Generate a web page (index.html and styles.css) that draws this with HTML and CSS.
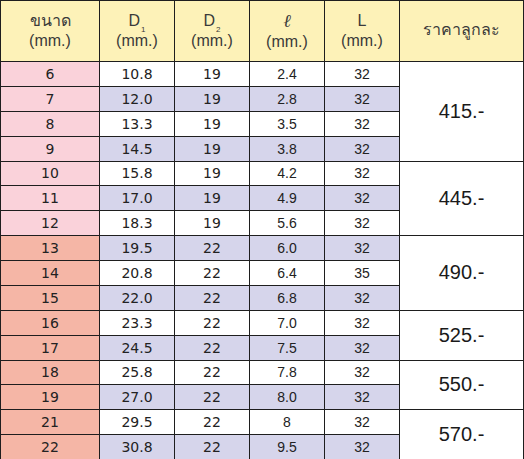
FILE: index.html
```html
<!doctype html>
<html lang="th">

<head>
  <meta charset="UTF-8" />
  <meta name="viewport" content="width=device-width, initial-scale=1.0" />
  <title>ตารางราคา</title>
  <link rel="stylesheet" href="styles.css">
</head>

<body>
  <table class="price-table">
    <colgroup>
      <col class="col-size">
      <col class="col-num">
      <col class="col-num">
      <col class="col-num">
      <col class="col-num">
      <col class="col-price">
    </colgroup>
    <thead>
      <tr class="head-row">
        <th>ขนาด<br>(mm.)</th>
        <th>D<span class="sub">1</span><br>(mm.)</th>
        <th>D<span class="sub">2</span><br>(mm.)</th>
        <th><span class="ell">ℓ</span><br>(mm.)</th>
        <th>L<br>(mm.)</th>
        <th class="price-head">ราคาลูกละ</th>
      </tr>
    </thead>
    <tbody>
      <tr>
        <td class="size pink">6</td><td class="v">10.8</td><td class="v">19</td><td class="a">2.4</td><td class="a">32</td>
        <td class="price" rowspan="4">415.-</td>
      </tr>
      <tr class="alt">
        <td class="size pink">7</td><td class="v">12.0</td><td class="v">19</td><td class="a">2.8</td><td class="a">32</td>
      </tr>
      <tr>
        <td class="size pink">8</td><td class="v">13.3</td><td class="v">19</td><td class="a">3.5</td><td class="a">32</td>
      </tr>
      <tr class="alt">
        <td class="size pink">9</td><td class="v">14.5</td><td class="v">19</td><td class="a">3.8</td><td class="a">32</td>
      </tr>
      <tr>
        <td class="size pink">10</td><td class="v">15.8</td><td class="v">19</td><td class="a">4.2</td><td class="a">32</td>
        <td class="price" rowspan="3">445.-</td>
      </tr>
      <tr class="alt">
        <td class="size pink">11</td><td class="v">17.0</td><td class="v">19</td><td class="a">4.9</td><td class="a">32</td>
      </tr>
      <tr>
        <td class="size pink">12</td><td class="v">18.3</td><td class="v">19</td><td class="a">5.6</td><td class="a">32</td>
      </tr>
      <tr class="alt">
        <td class="size salmon">13</td><td class="v">19.5</td><td class="v">22</td><td class="a">6.0</td><td class="a">32</td>
        <td class="price" rowspan="3">490.-</td>
      </tr>
      <tr>
        <td class="size salmon">14</td><td class="v">20.8</td><td class="v">22</td><td class="a">6.4</td><td class="a">35</td>
      </tr>
      <tr class="alt">
        <td class="size salmon">15</td><td class="v">22.0</td><td class="v">22</td><td class="a">6.8</td><td class="a">32</td>
      </tr>
      <tr>
        <td class="size salmon">16</td><td class="v">23.3</td><td class="v">22</td><td class="a">7.0</td><td class="a">32</td>
        <td class="price" rowspan="2">525.-</td>
      </tr>
      <tr class="alt">
        <td class="size salmon">17</td><td class="v">24.5</td><td class="v">22</td><td class="a">7.5</td><td class="a">32</td>
      </tr>
      <tr>
        <td class="size salmon">18</td><td class="v">25.8</td><td class="v">22</td><td class="a">7.8</td><td class="a">32</td>
        <td class="price" rowspan="2">550.-</td>
      </tr>
      <tr class="alt">
        <td class="size salmon">19</td><td class="v">27.0</td><td class="v">22</td><td class="a">8.0</td><td class="a">32</td>
      </tr>
      <tr>
        <td class="size salmon">21</td><td class="v">29.5</td><td class="v">22</td><td class="a">8</td><td class="a">32</td>
        <td class="price" rowspan="2">570.-</td>
      </tr>
      <tr class="alt">
        <td class="size salmon">22</td><td class="v">30.8</td><td class="v">22</td><td class="a">9.5</td><td class="a">32</td>
      </tr>
    </tbody>
  </table>
</body>

</html>
```

FILE: styles.css
```css
* {
  margin: 0;
  padding: 0;
  box-sizing: border-box;
}

body {
  background-color: #ffffff;
  font-family: 'Liberation Sans', 'Noto Sans', sans-serif;
  color: #222;
}

.price-table {
  width: 524px;
  border-collapse: collapse;
  table-layout: fixed;
}

.col-size {
  width: 99px;
}

.col-num {
  width: 75px;
}

.price-table th,
.price-table td {
  border: 1px solid #1e1e1e;
  text-align: center;
  vertical-align: middle;
}

/* header */
.head-row {
  height: 61px;
}

.head-row th {
  background-color: #fdf2b8;
  font-weight: normal;
  font-size: 16px;
  line-height: 20px;
  color: #3a3a3a;
}

.price-head {
  padding-bottom: 2px;
}

.sub {
  font-size: 8px;
  line-height: 0;
  vertical-align: -6px;
  margin-left: 1px;
}

.ell {
  font-family: 'DejaVu Serif', serif;
  font-style: italic;
  font-size: 18px;
}

/* body rows */
tbody tr {
  height: 24.875px;
}

tbody tr.alt td {
  background-color: #d6d5eb;
}

td.v,
td.size {
  font-family: 'DejaVu Sans', sans-serif;
  font-size: 14px;
}

td.a {
  font-size: 14px;
}

tbody tr td.pink {
  background-color: #fad2da;
}

tbody tr td.salmon {
  background-color: #f5b6a6;
}

tbody tr td.price {
  background-color: #ffffff;
  font-size: 20px;
  color: #1a1a1a;
}
```
